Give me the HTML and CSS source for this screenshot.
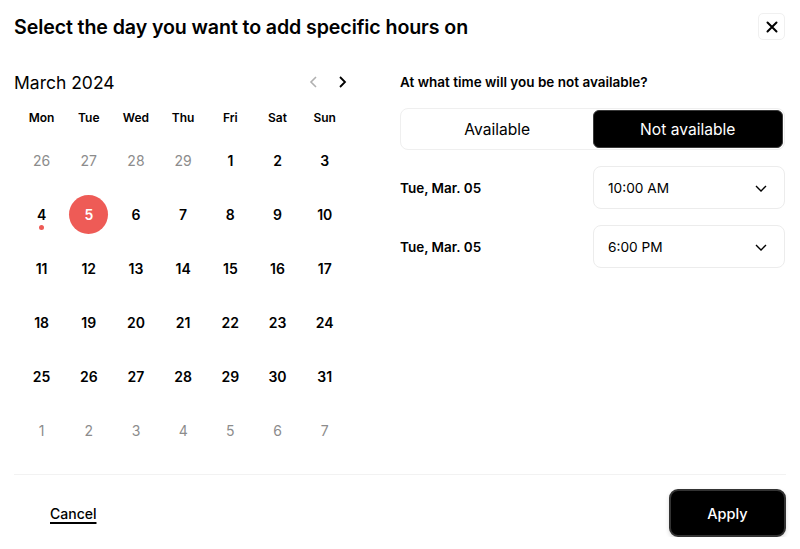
FILE: index.html
```html
<!DOCTYPE html>
<html lang="en">
<head>
  <meta charset="UTF-8">
  <meta name="viewport" content="width=device-width, initial-scale=1">
  <title>Specific hours</title>
  <link rel="stylesheet" href="styles.css">
</head>
<body>

  <div class="modal">

    <!-- Header -->
    <header class="modal__head">
      <h1>Select the day you want to add specific hours on</h1>
      <button class="close" aria-label="Close">
        <svg width="12" height="12" viewBox="0 0 12 12"><path d="M1.5 1.5l9 9M10.5 1.5l-9 9" stroke="#000" stroke-width="2" stroke-linecap="round"/></svg>
      </button>
    </header>

    <div class="modal__body">

      <!-- Calendar -->
      <section class="cal">
        <div class="cal__head">
          <span class="cal__month">March 2024</span>
          <div class="cal__nav">
            <svg class="prev" width="14" height="14" viewBox="0 0 14 14"><path d="M9 2L4 7l5 5" fill="none" stroke="#b0b0b0" stroke-width="1.6"/></svg>
            <svg class="next" width="14" height="14" viewBox="0 0 14 14"><path d="M5 2l5 5-5 5" fill="none" stroke="#000" stroke-width="1.8"/></svg>
          </div>
        </div>

        <div class="cal__days">
          <span>Mon</span><span>Tue</span><span>Wed</span><span>Thu</span><span>Fri</span><span>Sat</span><span>Sun</span>
        </div>

        <div class="cal__grid">
          <span class="muted">26</span><span class="muted">27</span><span class="muted">28</span><span class="muted">29</span><span>1</span><span>2</span><span>3</span>
          <span class="marked">4</span><span class="selected"><b>5</b></span><span>6</span><span>7</span><span>8</span><span>9</span><span>10</span>
          <span>11</span><span>12</span><span>13</span><span>14</span><span>15</span><span>16</span><span>17</span>
          <span>18</span><span>19</span><span>20</span><span>21</span><span>22</span><span>23</span><span>24</span>
          <span>25</span><span>26</span><span>27</span><span>28</span><span>29</span><span>30</span><span>31</span>
          <span class="muted">1</span><span class="muted">2</span><span class="muted">3</span><span class="muted">4</span><span class="muted">5</span><span class="muted">6</span><span class="muted">7</span>
        </div>
      </section>

      <!-- Time side -->
      <section class="times">
        <p class="times__label">At what time will you be not available?</p>

        <div class="toggle">
          <button class="toggle__opt">Available</button>
          <button class="toggle__opt active">Not available</button>
        </div>

        <div class="time-row">
          <span class="time-row__date">Tue, Mar. 05</span>
          <div class="select">
            <span>10:00 AM</span>
            <svg width="14" height="14" viewBox="0 0 14 14"><path d="M2 5l5 5 5-5" fill="none" stroke="#000" stroke-width="1.4"/></svg>
          </div>
        </div>

        <div class="time-row">
          <span class="time-row__date">Tue, Mar. 05</span>
          <div class="select">
            <span>6:00 PM</span>
            <svg width="14" height="14" viewBox="0 0 14 14"><path d="M2 5l5 5 5-5" fill="none" stroke="#000" stroke-width="1.4"/></svg>
          </div>
        </div>
      </section>

    </div>

    <!-- Footer -->
    <footer class="modal__foot">
      <a class="cancel" href="#">Cancel</a>
      <button class="apply">Apply</button>
    </footer>

  </div>

</body>
</html>
```

FILE: styles.css
```css
/* Reset */
*, *::before, *::after {
  margin: 0;
  padding: 0;
  box-sizing: border-box;
}
body {
  font-family: Inter, "Noto Sans", sans-serif;
  background: #fff;
  color: #000;
}
button {
  font-family: inherit;
  background: none;
  border: 0;
  cursor: pointer;
  color: inherit;
}

.modal {
  width: 800px;
  padding: 13px 14px 0 14px;
}

/* ===== Header ===== */
.modal__head {
  height: 27px;
  display: flex;
  align-items: center;
  justify-content: space-between;
}
.modal__head h1 {
  font-size: 19.6px;
  font-weight: 600;
  letter-spacing: -0.1px;
}
.close {
  width: 27px;
  height: 27px;
  margin-right: 1px;
  border: 1px solid #f0f0f0;
  border-radius: 5px;
  display: flex;
  align-items: center;
  justify-content: center;
}

/* ===== Body: two columns ===== */
.modal__body {
  display: grid;
  grid-template-columns: 336px 385px;
  column-gap: 50px;
  margin-top: 28px;
}

/* calendar */
.cal__head {
  height: 28px;
  display: flex;
  align-items: center;
  justify-content: space-between;
}
.cal__month {
  font-size: 17.5px;
  font-weight: 400;
}
.cal__nav {
  display: flex;
  gap: 14px;
  margin-right: 1px;
}
.cal__days,
.cal__grid {
  display: grid;
  grid-template-columns: repeat(7, 47.2px);
  margin-left: 4px;
}
.cal__days {
  margin-top: 9px;
  height: 24px;
  align-items: center;
  font-size: 12px;
  font-weight: 600;
  text-align: center;
}
.cal__grid {
  margin-top: 4px;
  grid-auto-rows: 54px;
  font-size: 14px;
  font-weight: 600;
}
.cal__grid span {
  position: relative;
  display: flex;
  align-items: center;
  justify-content: center;
}
.cal__grid .muted {
  color: #8c8c8c;
  font-weight: 400;
}
.cal__grid .selected b {
  width: 39px;
  height: 39px;
  border-radius: 50%;
  background: #ee5b56;
  color: #fff;
  display: flex;
  align-items: center;
  justify-content: center;
  font-weight: 600;
}
.cal__grid .marked::after {
  content: "";
  position: absolute;
  left: 50%;
  top: 38px;
  width: 5px;
  height: 5px;
  margin-left: -2.5px;
  border-radius: 50%;
  background: #ee5b56;
}

/* time side */
.times__label {
  height: 28px;
  line-height: 28px;
  font-size: 13.5px;
  font-weight: 600;
}
.toggle {
  margin-top: 12px;
  height: 42px;
  display: grid;
  grid-template-columns: 1fr 1fr;
  padding: 1px;
  border: 1px solid #efefef;
  border-radius: 8px;
}
.toggle__opt {
  font-size: 15.6px;
  font-weight: 400;
  border-radius: 6px;
}
.toggle__opt.active {
  background: #000;
  color: #fff;
  border: 1px solid #3a3a3a;
}
.time-row {
  display: flex;
  align-items: center;
  justify-content: space-between;
  margin-top: 16px;
}
.time-row:first-of-type {
  margin-top: 17px;
}
.time-row__date {
  font-size: 13.5px;
  font-weight: 600;
}
.select {
  width: 192px;
  height: 43px;
  border: 1px solid #ececec;
  border-radius: 8px;
  display: flex;
  align-items: center;
  justify-content: space-between;
  padding: 0 16px 0 14px;
  font-size: 13.7px;
}

/* ===== Footer ===== */
.modal__foot {
  margin-top: 17px;
  border-top: 1px solid #f2f2f2;
  padding-top: 14px;
  display: flex;
  align-items: center;
  justify-content: space-between;
}
.cancel {
  margin-left: 36px;
  font-size: 14px;
  font-weight: 500;
  color: #000;
  text-decoration: underline;
  text-decoration-thickness: 1.5px;
  text-underline-offset: 3px;
}
.apply {
  width: 117px;
  height: 48px;
  background: #000;
  color: #fff;
  font-size: 14.5px;
  font-weight: 500;
  border: 2px solid #333;
  border-radius: 9px;
  box-shadow: 0 2px 4px rgba(0, 0, 0, 0.15);
}
```
